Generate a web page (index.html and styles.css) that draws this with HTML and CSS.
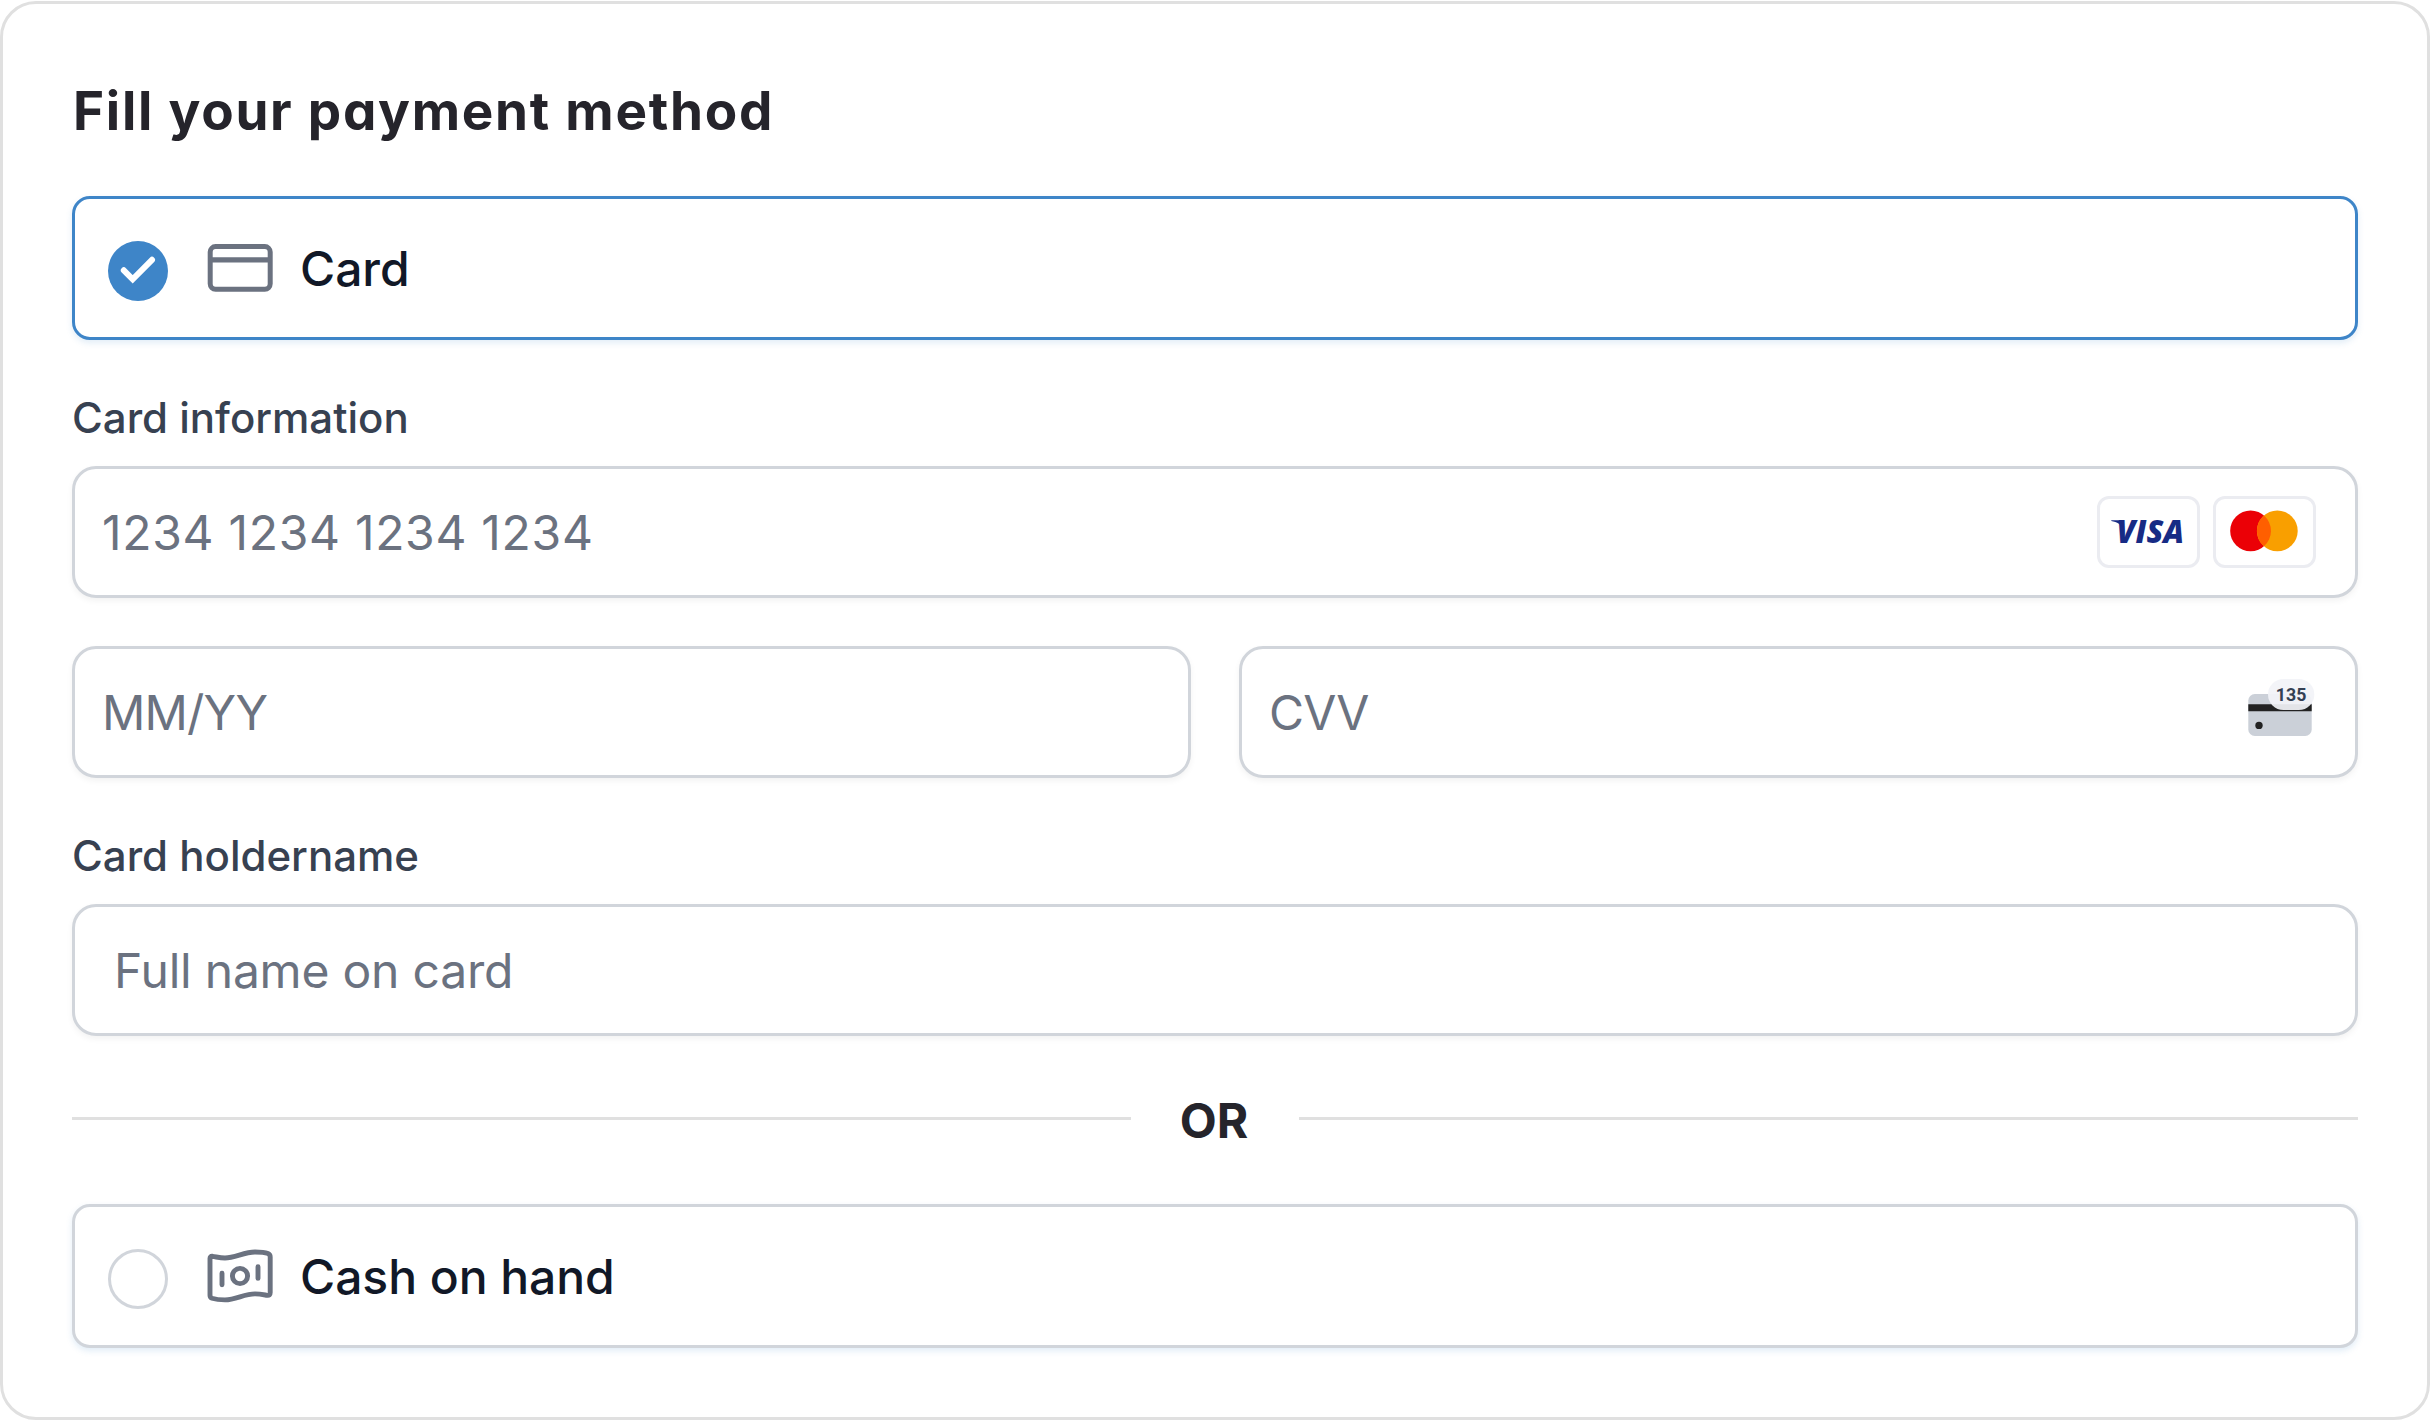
FILE: index.html
```html
<!DOCTYPE html>
<html lang="en">
<head>
<meta charset="utf-8">
<title>Payment method</title>
<link rel="stylesheet" href="styles.css">
</head>
<body>
<main class="panel">
  <h1 class="title">Fill your payment method</h1>

  <div class="option option--selected">
    <svg class="radio" viewBox="0 0 60 60">
      <circle cx="30" cy="30" r="30" fill="#3e85c8"/>
      <path d="M15.8 29.3 24.7 38.3 44 18.8" fill="none" stroke="#fff" stroke-width="6" stroke-linecap="round" stroke-linejoin="miter"/>
    </svg>
    <svg class="option-icon" viewBox="0 0 66 56">
      <rect x="3.2" y="6.6" width="60" height="42.6" rx="5.4" fill="none" stroke="#6b7280" stroke-width="5"/>
      <path d="M3.2 19.8h60" stroke="#6b7280" stroke-width="5.2"/>
    </svg>
    <span class="option-label">Card</span>
  </div>

  <div class="label">Card information</div>
  <div class="field">
    <span class="placeholder placeholder--number">1234 1234 1234 1234</span>
    <span class="brands">
      <span class="brand">
        <svg class="brand-art" viewBox="0 0 97 66">
          <text class="visa" x="16.6" y="44.4" textLength="67.4" lengthAdjust="spacingAndGlyphs">VISA</text>
          <path d="M11.3 21.2h9.5l3.4 9C21.5 26 17 22.8 11.3 22z" fill="#172b85"/>
        </svg>
      </span>
      <span class="brand">
        <svg class="brand-art" viewBox="0 0 97 66">
          <circle cx="34.6" cy="31.9" r="20.4" fill="#eb0006"/>
          <circle cx="61.3" cy="31.9" r="20.4" fill="#f99f00"/>
          <path d="M47.95 16.5a20.4 20.4 0 0 1 0 30.8a20.4 20.4 0 0 1 0-30.8z" fill="#ff5f00"/>
        </svg>
      </span>
    </span>
  </div>

  <div class="row">
    <div class="field"><span class="placeholder placeholder--caps">MM/YY</span></div>
    <div class="field">
      <span class="placeholder placeholder--caps">CVV</span>
      <svg class="cvv-icon" viewBox="0 0 68 60">
        <rect x="1.3" y="16" width="63.4" height="42" rx="6.5" fill="#cbd0d8"/>
        <path d="M1.3 26.3h63.4v7H1.3z" fill="#222"/>
        <circle cx="12" cy="47.4" r="3.7" fill="#222"/>
        <rect x="21" y="1" width="46.3" height="31" rx="15.5" fill="#f2f3f8" fill-opacity=".93"/>
        <text class="cvv-digits" x="28.8" y="23" textLength="30.6" lengthAdjust="spacingAndGlyphs">135</text>
      </svg>
    </div>
  </div>

  <div class="label label--holder">Card holdername</div>
  <div class="field field--holder"><span class="placeholder">Full name on card</span></div>

  <div class="divider"><span class="rule"></span><span class="or">OR</span><span class="rule"></span></div>

  <div class="option">
    <svg class="radio" viewBox="0 0 60 60">
      <circle cx="30" cy="30" r="28.5" fill="#fff" stroke="#d1d5db" stroke-width="3"/>
    </svg>
    <svg class="option-icon" viewBox="0 0 66 56">
      <g fill="none" stroke="#6b7280" stroke-width="4.9" stroke-linecap="round" stroke-linejoin="round">
        <path d="M3 10.500C3 9 3.800 8.100 5.500 8.300C10 9 13 10 18 10C28 10 37 4 48 4C54 4 58 4.400 61 5.600C62.600 6.300 63.200 7.200 63.200 9V44.500C63.200 46.800 62.200 47.700 60 47.300C56 46.600 53 45.900 48 45.900C37 45.900 29 51.900 18 51.900C12 51.900 8 51.200 5 50.200C3.500 49.600 3 48.700 3 47.200Z"/>
        <circle cx="33" cy="28" r="7.6"/>
        <path d="M15 25.200V36.800M51 18.800V30.400"/>
      </g>
    </svg>
    <span class="option-label">Cash on hand</span>
  </div>
</main>
</body>
</html>
```
FILE: styles.css
```css
* { box-sizing: border-box; }

body {
  margin: 0;
  padding-top: 1px;
  background: #fff;
  font-family: Inter, "Liberation Sans", sans-serif;
}

.panel {
  height: 1419px;
  padding: 77px 69px 69px;
  border: 3px solid #e0e0e0;
  border-radius: 36px;
  background: #fff;
}

.title {
  margin: 0 0 55px;
  padding-left: 1px;
  font-size: 53px;
  line-height: 60px;
  font-weight: 700;
  letter-spacing: 1.74px;
  font-feature-settings: "cv11";
  color: #25242b;
  white-space: nowrap;
}

.option {
  display: flex;
  align-items: center;
  height: 144px;
  padding: 0 33px;
  border: 3px solid #d1d5db;
  border-radius: 18px;
  background: #fff;
  box-shadow: 0 3px 6px rgba(62, 133, 200, 0.15);
}

.option--selected { border-color: #3e85c8; }

.radio {
  width: 60px;
  height: 60px;
  margin: 6px 39px 0 0;
}

.option-icon {
  width: 66px;
  height: 56px;
  margin-right: 27px;
}

.option-label {
  font-size: 48px;
  font-weight: 500;
  letter-spacing: -0.05px;
  color: #111827;
}

.label {
  margin: 48px 0 18px;
  font-size: 42px;
  line-height: 60px;
  font-weight: 500;
  color: #374151;
}

.field {
  display: flex;
  align-items: center;
  justify-content: space-between;
  height: 132px;
  padding: 0 39px 0 27px;
  border: 3px solid #d1d5db;
  border-radius: 24px;
  background: #fff;
  box-shadow: 0 3px 6px rgba(0, 0, 0, 0.05);
}

.field--holder { padding-left: 39px; }

.placeholder {
  font-size: 48px;
  letter-spacing: -0.22px;
  color: #6b7280;
  white-space: nowrap;
}

.placeholder--number { letter-spacing: 0.7px; }

.placeholder--caps { letter-spacing: -0.8px; }

.brands {
  display: flex;
  gap: 13px;
}

.brand {
  width: 103px;
  height: 72px;
  border: 3px solid #ebecf1;
  border-radius: 12px;
}

.brand-art {
  display: block;
  width: 97px;
  height: 66px;
}

.visa {
  font: italic 800 32px "Open Sans", sans-serif;
  fill: #172b85;
}

.row {
  display: grid;
  grid-template-columns: 1fr 1fr;
  gap: 48px;
  margin-top: 48px;
}

.cvv-icon {
  width: 68px;
  height: 60px;
  margin: 0 1px 8px 0;
}

.cvv-digits {
  font: 700 18px Roboto, sans-serif;
  fill: #344054;
}

.divider {
  display: flex;
  align-items: center;
  height: 168px;
}

.rule {
  flex: 1;
  height: 3px;
  margin-bottom: 3px;
  background: #e0e0e0;
}

.or {
  width: 168px;
  padding-right: 2px;
  text-align: center;
  font-size: 48px;
  font-weight: 700;
  color: #25242b;
}
```
